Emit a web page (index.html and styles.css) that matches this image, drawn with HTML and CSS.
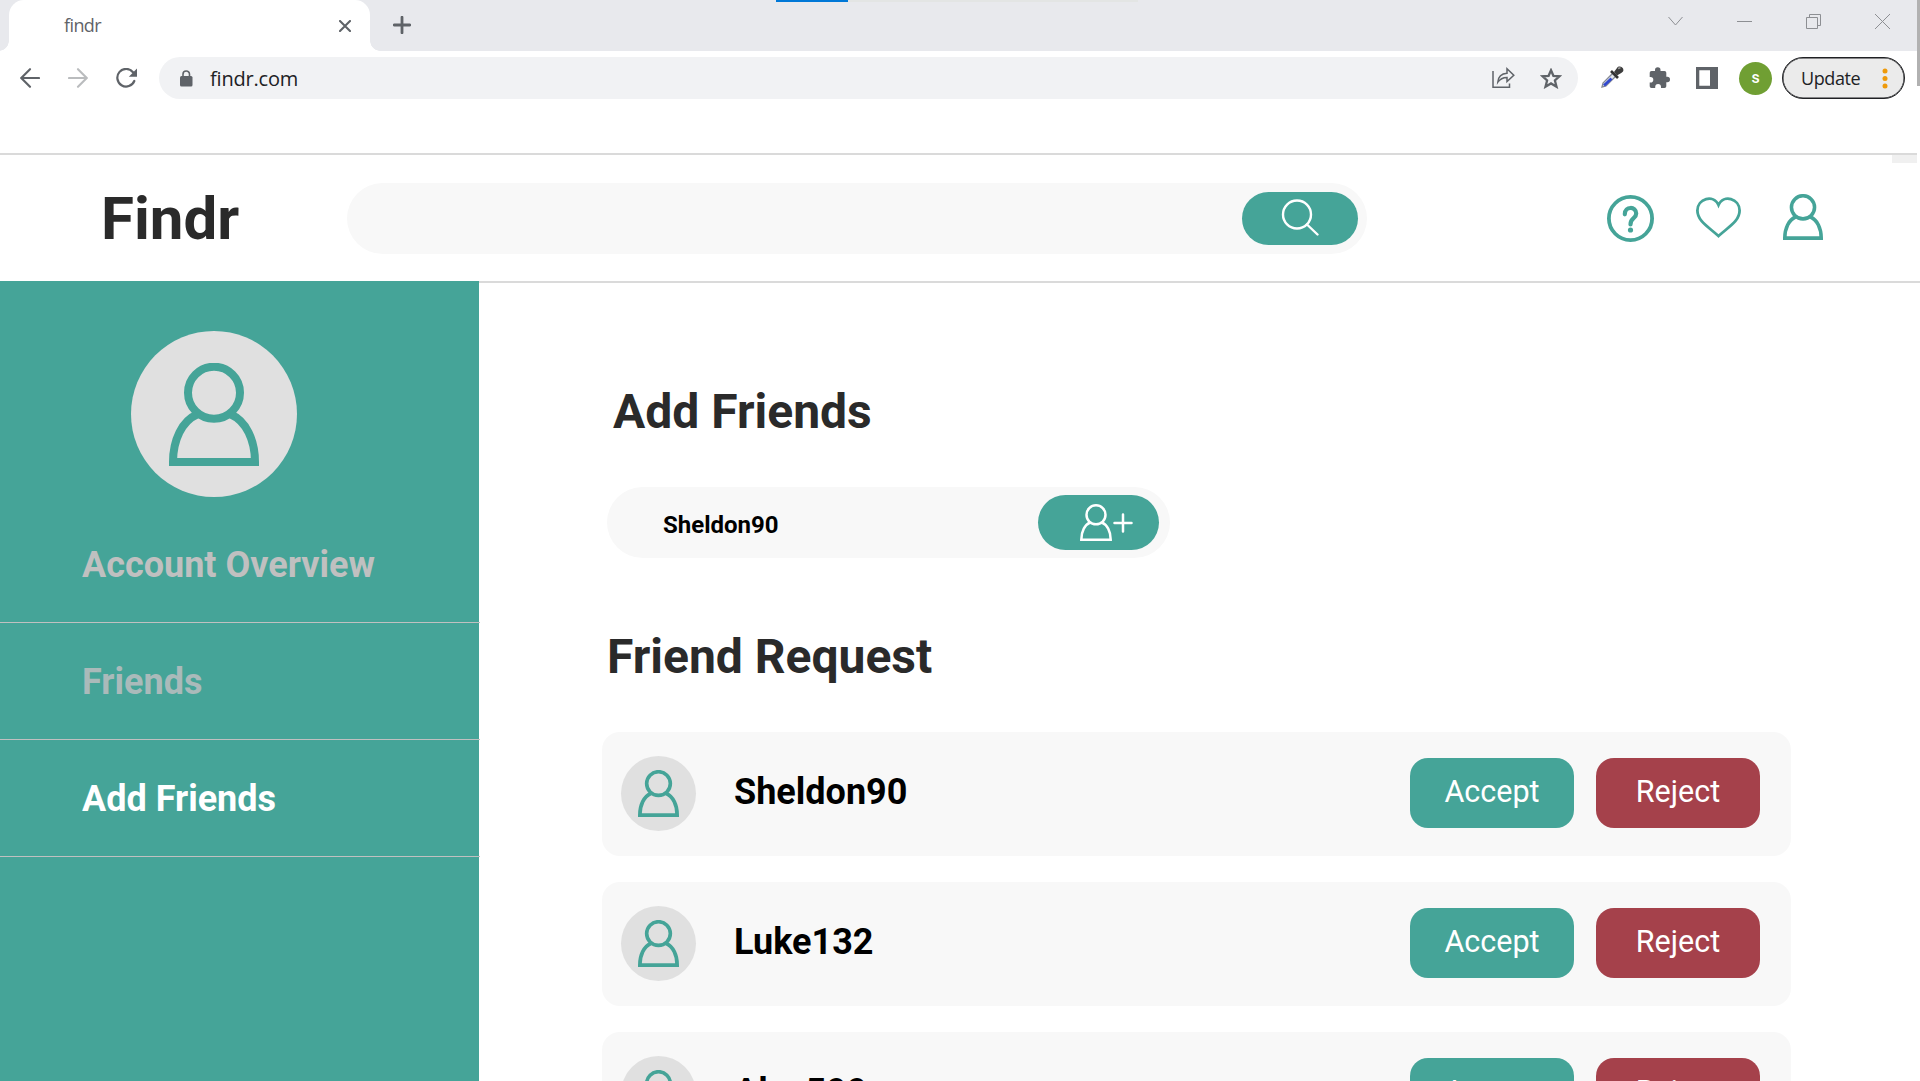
FILE: index.html
```html
<!DOCTYPE html>
<html lang="en">
<head>
<meta charset="utf-8">
<title>findr</title>
<link rel="stylesheet" href="styles.css">
</head>
<body>
<svg class="defs" aria-hidden="true">
  <symbol id="person" viewBox="0 0 90 103">
    <g fill="none" stroke="currentColor" stroke-width="8">
      <circle cx="45" cy="29.700" r="26"/>
      <path d="M28 51.500C13 58 4 77 4 99H86C86 77 77 58 62 51.500"/>
    </g>
  </symbol>
  <symbol id="person-thin" viewBox="0 0 32 37">
    <g fill="none" stroke="currentColor" stroke-width="2.500">
      <circle cx="16" cy="10.800" r="9.500"/>
      <path d="M10.200 18.500C5 20.500 1.300 27 1.300 35.700H30.700C30.700 27 27 20.500 21.800 18.500"/>
    </g>
  </symbol>
</svg>
<div class="tabstrip">
  <div class="tab">
    <span class="tab-title">findr</span>
    <svg class="tab-close" width="12" height="12" viewBox="0 0 12 12"><path d="M1 1L11 11M11 1L1 11" stroke="#5f6368" stroke-width="2.100" stroke-linecap="round"/></svg>
  </div>
  <svg class="new-tab" width="18" height="18" viewBox="0 0 18 18"><path d="M9 1.200V16.800M1.200 9H16.800" stroke="#5f6368" stroke-width="2.800" stroke-linecap="round"/></svg>
  <div class="window-controls">
    <svg width="15" height="15" viewBox="0 0 15 15"><path d="M.5 3L7.500 11L14.500 3"/></svg>
    <svg width="15" height="15" viewBox="0 0 15 15"><path d="M0 7.500H15"/></svg>
    <svg width="15" height="15" viewBox="0 0 15 15"><path d="M.5 3.500H11.500V14.500H.5ZM3.500 3.500V.5H14.500V11.500H11.500"/></svg>
    <svg width="15" height="15" viewBox="0 0 15 15"><path d="M0 0L15 15M15 0L0 15"/></svg>
  </div>
  <div class="load-bar"></div>
</div>
<div class="toolbar">
  <div class="nav-buttons">
    <svg width="20" height="20" viewBox="0 0 20 20"><path d="M19 10H1.500M10 1.200L1.300 10L10 18.800" fill="none" stroke="#5f6368" stroke-width="2.100" stroke-linecap="round"/></svg>
    <svg width="20" height="20" viewBox="0 0 20 20"><path d="M1 10H18.500M10 1.200L18.700 10L10 18.800" fill="none" stroke="#babcbe" stroke-width="2.100" stroke-linecap="round"/></svg>
    <svg width="22" height="20" viewBox="0 0 22 20"><path d="M17 4.200A8.800 8.800 0 1 0 18.300 13" fill="none" stroke="#5f6368" stroke-width="2.200" stroke-linecap="round"/><path d="M21 .5V8.700H12.800Z" fill="#5f6368"/></svg>
  </div>
  <div class="omnibox">
    <svg width="13" height="17" viewBox="0 0 13 17"><rect y="6" width="12.500" height="10.500" rx="1.500" fill="#5f6368"/><path d="M3 7V4.200A3.250 3.250 0 0 1 9.500 4.200V7" fill="none" stroke="#5f6368" stroke-width="1.600"/></svg>
    <span class="url">findr.com</span>
    <svg class="share" width="23" height="22" viewBox="0 0 23 22"><path d="M1 4V20.200H17.500V16.500" fill="none" stroke="#5f6368" stroke-width="1.500"/><path d="M5.800 15.200C6.300 9.500 9.500 6.600 15 6.300V1.800L21.800 8.300L15 14.500V10.500C11 10.600 8 12 5.800 15.200Z" fill="none" stroke="#5f6368" stroke-width="1.500"/></svg>
    <svg width="22" height="21" viewBox="0 0 22 21"><path d="M11 2.300L13.400 7.800L19.500 8.300L14.900 12.500L16.500 18.700L11 15.400L5.500 18.700L7.100 12.500L2.500 8.300L8.600 7.800Z" fill="none" stroke="#5f6368" stroke-width="2.300"/></svg>
  </div>
  <svg class="dropper" width="24" height="24" viewBox="0 0 24 24"><path d="M2 22L3 18L13 8L16 11L6 21Z" fill="#e3e7ee" stroke="#858994" stroke-width="1.300"/><path d="M4 20.500L11.500 13.500" stroke="#3148cf" stroke-width="2.800"/><path d="M11 6L18 13" stroke="#333" stroke-width="2.600"/><path d="M14 7L17 3C19-.5 25 2.500 23 6.500C22 8 19 9 17 10.500Z" fill="#3d3d3d"/><path d="M18 3.500L20.500 2.800" stroke="#9a9a9a" stroke-width="1.500"/></svg>
  <svg class="puzzle" width="22" height="22" viewBox="0 0 22 22"><path d="M2.500 4H6V3A2.700 2.700 0 0 1 11.500 3V4H15.500Q17.300 4 17.300 5.800V9.800H18.300A2.700 2.700 0 0 1 18.300 15.200H17.300V19.200Q17.300 21 15.500 21H12V20A2.900 2.900 0 0 0 6.200 20V21H2.500Q.7 21 .7 19.200V15.600H1.500A2.800 2.800 0 0 0 1.500 10H.7V5.800Q.7 4 2.500 4Z" fill="#5f6368"/></svg>
  <svg class="panel" width="22" height="22" viewBox="0 0 22 22"><path d="M0 0H22V22H0ZM3.300 3.300V18.700H14V3.300Z" fill="#5f6368" fill-rule="evenodd"/></svg>
  <span class="profile">s</span>
  <div class="update">
    <span>Update</span>
    <svg width="6" height="21" viewBox="0 0 6 21"><g fill="#ee9a0b"><circle cx="3" cy="3" r="2.500"/><circle cx="3" cy="10.500" r="2.500"/><circle cx="3" cy="18" r="2.500"/></g></svg>
  </div>
</div>
<div class="scroll-thumb"></div>
<div class="scroll-corner"></div>
<header class="site-header">
  <div class="brand">Findr</div>
  <div class="search">
    <div class="search-button"><svg width="38" height="38" viewBox="0 0 38 38"><g fill="none" stroke="#fff" stroke-width="2.400" stroke-linecap="round"><circle cx="16" cy="15.500" r="14"/><path d="M26 25.500L36.500 35.500"/></g></svg></div>
  </div>
  <div class="actions">
    <svg width="47" height="47" viewBox="0 0 47 47"><g fill="none" stroke="currentColor"><circle cx="23.500" cy="23.500" r="21.600" stroke-width="3.800"/><path d="M17.800 19.300C17.800 11 29.200 11 29.200 18.500C29.200 24 23.500 22.500 23.500 29.500" stroke-width="4.200" stroke-linecap="round"/></g><circle cx="23.500" cy="35" r="2.600" fill="currentColor"/></svg>
    <svg class="heart" width="45" height="41" viewBox="0 0 45 41"><path d="M22.500 39C12 29.500 1.400 24 1.400 13.500C1.400 1.500 17.500-3 22.500 8C27.500-3 43.600 1.500 43.600 13.500C43.600 24 33 29.500 22.500 39Z" fill="none" stroke="currentColor" stroke-width="2.800"/></svg>
    <svg class="account" width="40" height="46" viewBox="0 0 90 103"><use href="#person"/></svg>
  </div>
</header>
<div class="page">
  <nav class="sidebar">
    <div class="avatar"><svg width="90" height="103"><use href="#person"/></svg></div>
    <a class="nav-item overview">Account Overview</a>
    <a class="nav-item friends">Friends</a>
    <a class="nav-item active">Add Friends</a>
  </nav>
  <main class="content">
    <h1 class="add-title">Add Friends</h1>
    <div class="add-field">
      <span>Sheldon90</span>
      <div class="add-button"><svg width="32" height="37"><use href="#person-thin"/></svg><svg width="20" height="20" viewBox="0 0 20 20"><path d="M10 1.500V18.500M1.500 10H18.500" stroke="#fff" stroke-width="2.500" stroke-linecap="round"/></svg></div>
    </div>
    <h2 class="request-title">Friend Request</h2>
    <div class="requests">
      <div class="request"><div class="thumb"><svg width="41" height="47"><use href="#person"/></svg></div><span class="name">Sheldon90</span><button class="accept">Accept</button><button class="reject">Reject</button></div>
      <div class="request"><div class="thumb"><svg width="41" height="47"><use href="#person"/></svg></div><span class="name">Luke132</span><button class="accept">Accept</button><button class="reject">Reject</button></div>
      <div class="request"><div class="thumb"><svg width="41" height="47"><use href="#person"/></svg></div><span class="name">Alex599</span><button class="accept">Accept</button><button class="reject">Reject</button></div>
    </div>
  </main>
</div>
</body>
</html>
```
FILE: styles.css
```css
* { box-sizing: border-box; }
html, body { margin: 0; height: 1081px; overflow: hidden; }
body { position: relative; background: #fff; font-family: Roboto, "Liberation Sans", sans-serif; }
svg { display: block; flex: none; }
.defs { position: absolute; width: 0; height: 0; }

/* Browser frame */
.tabstrip { position: relative; display: flex; align-items: flex-start; height: 51px; background: #e8e9ed; font-family: "Open Sans", "Noto Sans", sans-serif; }
.tab { position: relative; display: flex; justify-content: space-between; width: 361px; height: 51px; margin-left: 9px; padding: 0 19px 0 55px; background: #fff; border-radius: 15px 15px 0 0; }
.tab::before, .tab::after { content: ""; position: absolute; bottom: 0; width: 10px; height: 10px; }
.tab::before { left: -10px; background: radial-gradient(circle at 0 0, transparent 9.5px, #fff 10px); }
.tab::after { right: -10px; background: radial-gradient(circle at 100% 0, transparent 9.5px, #fff 10px); }
.tab-title { font-size: 18px; line-height: 51px; color: #5f6368; letter-spacing: -.6px; }
.tab-close { margin-top: 20px; }
.new-tab { margin: 16px 0 0 23px; }
.window-controls { display: flex; gap: 54px; margin: 14px 30px 0 auto; fill: none; stroke: #8d8f93; stroke-width: 1; }
.load-bar { position: absolute; left: 776px; top: 0; width: 362px; height: 2px; background: linear-gradient(90deg, #0078d7 72px, #e3e5e4 72px); }
.toolbar { display: flex; align-items: flex-start; height: 104px; padding-top: 6px; border-bottom: 2px solid #dadada; font-family: "Open Sans", "Noto Sans", sans-serif; margin-right: 3px; }
.nav-buttons { display: flex; gap: 28px; padding: 11px 0 0 20px; width: 159px; }
.omnibox { display: flex; align-items: center; width: 1419px; height: 42px; padding: 0 16px 0 21px; background: #f1f2f4; border-radius: 21px; }
.url { margin: 0 auto 0 17px; padding-top: 1px; font-size: 20px; line-height: 41px; color: #202124; letter-spacing: -.2px; }
.share { margin-right: 25px; }
.dropper { margin: 8px 0 0 22px; }
.puzzle { margin: 10px 0 0 25px; }
.panel { margin: 10px 0 0 25px; }
.profile { width: 33px; height: 33px; margin: 5px 0 0 21px; border-radius: 50%; background: #709f33; color: #fff; font: 500 16px/32px Roboto, sans-serif; text-align: center; }
.update { display: flex; align-items: center; justify-content: space-between; width: 123px; height: 42px; margin-left: 10px; padding: 0 16px 0 18px; border: 2px solid #202124; border-width: 1.500px; border-radius: 21px; background: #ebebeb; color: #202124; font-size: 18px; letter-spacing: -.4px; box-shadow: inset 0 0 0 .5px #202124; }
.scroll-thumb { position: absolute; right: 0; top: 0; width: 3px; height: 86px; background: #b1b1b1; }
.scroll-corner { position: absolute; right: 3px; top: 155px; width: 25px; height: 8px; background: #f0f0f0; }

/* Site header */
.site-header { display: flex; height: 128px; padding-top: 28px; border-bottom: 2px solid #dadada; }
.brand { width: 347px; padding-left: 101px; font-size: 60px; line-height: 71px; font-weight: 700; color: #2a2a2a; }
.search { display: flex; justify-content: flex-end; width: 1020px; height: 71px; padding: 9px; background: #f8f8f8; border-radius: 35.500px; }
.search-button { width: 116px; height: 53px; padding: 7px 0 0 39px; background: #45a498; border-radius: 26.500px; }
.actions { display: flex; margin-left: 240px; padding-top: 12px; color: #45a498; }
.heart { margin: 2px 0 0 42px; }
.account { margin: -1px 0 0 42px; }

/* Body */
.page { display: flex; height: 800px; margin-top: -2px; overflow: hidden; }
.sidebar { width: 479px; height: 800px; padding-top: 50px; background: #45a498; }
.avatar { display: flex; width: 166px; height: 166px; margin-left: 131px; padding: 32px 38px; border-radius: 50%; background: #e0e0e0; color: #45a498; }
.nav-item { display: block; width: 480px; height: 117px; padding: 2px 0 0 82px; border-bottom: 1px solid #c0c0c0; font-size: 36px; line-height: 115px; font-weight: 700; white-space: nowrap; }
.overview { height: 126px; padding-top: 11px; color: #c0c0c0; }
.friends { color: #aababa; }
.active { color: #fff; }
.content { width: 1441px; padding: 103px 0 0 123px; }
h1, h2 { margin: 0; font-size: 48px; line-height: 56px; font-weight: 700; color: #2a2a2a; }
.add-title { padding-left: 11px; }
.add-field { display: flex; justify-content: space-between; width: 563px; height: 71px; margin: 47px 0 0 5px; padding: 8px 11px 0 56px; border-radius: 35.500px; background: #f8f8f8; font-size: 24px; line-height: 60px; font-weight: 700; color: #000; }
.add-button { display: flex; gap: 1px; width: 121px; height: 55px; padding: 9px 0 0 42px; border-radius: 27.500px; background: #45a498; color: #fff; }
.add-button svg + svg { margin-top: 9px; }
.request-title { margin-top: 71px; padding-left: 5px; }
.requests { display: flex; flex-direction: column; gap: 26px; margin-top: 47px; }
.request { display: flex; flex: none; width: 1189px; height: 124px; padding: 24px 31px 0 19px; border-radius: 18px; background: #f8f8f8; }
.thumb { width: 75px; height: 75px; padding: 14px 17px; border-radius: 50%; background: #e0e0e0; color: #45a498; }
.name { margin: 0 auto 0 38px; font-size: 36px; line-height: 73px; font-weight: 700; color: #000; }
button { width: 164px; height: 70px; margin: 2px 0 0 22px; padding: 0 0 2px; border: 0; border-radius: 18px; color: #fff; font: 400 30.500px/68px Roboto, sans-serif; }
.accept { background: #45a498; }
.reject { background: #a5414b; }
```
